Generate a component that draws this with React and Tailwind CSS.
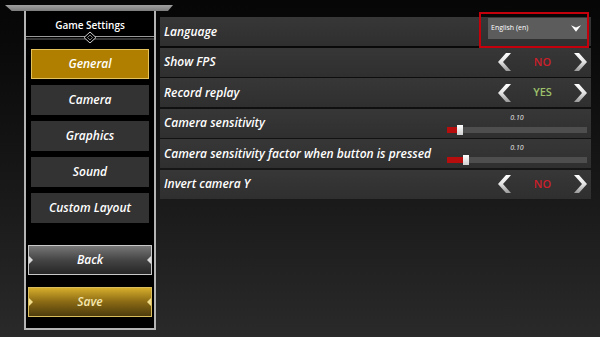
import React from 'react';

const font = { fontFamily: '"Open Sans", "Noto Sans", sans-serif' };

const menu = ['General', 'Camera', 'Graphics', 'Sound', 'Custom Layout'];

const Chevron = ({ dir }) => (
  <svg width="14" height="18" viewBox="0 0 14 18">
    <defs>
      <linearGradient id={`chev-${dir}`} x1="0" y1="0" x2="0" y2="1">
        <stop offset="0" stopColor="#ffffff" />
        <stop offset="0.5" stopColor="#e4e4e4" />
        <stop offset="1" stopColor="#9a9a9a" />
      </linearGradient>
    </defs>
    {dir === 'left' ? (
      <polygon points="9,0 14,0 6,9 14,18 9,18 1,9" fill={`url(#chev-${dir})`} />
    ) : (
      <polygon points="5,0 0,0 8,9 0,18 5,18 13,9" fill={`url(#chev-${dir})`} />
    )}
  </svg>
);

const Toggle = ({ value, yes }) => (
  <div className="mr-[3px] flex w-[91px] items-center">
    <Chevron dir="left" />
    <span className={`flex-1 text-center text-[11px] font-semibold ${yes ? 'text-[#9cc06a]' : 'text-[#cc1f2b]'}`}>{value}</span>
    <Chevron dir="right" />
  </div>
);

const Slider = ({ fill }) => (
  <div className="mr-[4px] flex w-[140px] flex-col items-center self-start pt-[4px]">
    <span className="text-[7px] italic leading-[10px] text-[#e8e8e8]">0.10</span>
    <div className="relative mt-[4px] h-[6px] w-full bg-[#4e4e4e]">
      <div className="h-full bg-[#b80d0d]" style={{ width: fill }} />
      <div className="absolute top-[-2px] h-[10px] w-[6px] bg-gradient-to-b from-white to-[#cfcfcf]" style={{ left: fill }} />
    </div>
  </div>
);

const Row = ({ label, children, relative }) => (
  <div className={`flex h-[29px] items-center justify-between bg-gradient-to-b from-[#373737] to-[#2f2f2f] pl-[4px] ${relative ? 'relative' : ''}`}>
    <span className="text-[12px] font-semibold italic text-white">{label}</span>
    {children}
  </div>
);

const Notches = ({ color }) => (
  <>
    <span className={`absolute left-0 top-1/2 h-0 w-0 -translate-y-1/2 border-y-[4px] border-l-[4px] border-y-transparent ${color}`} />
    <span className={`absolute right-0 top-1/2 h-0 w-0 -translate-y-1/2 border-y-[4px] border-r-[4px] border-y-transparent ${color}`} />
  </>
);

export default function App() {
  return (
    <div style={font} className="relative h-[337px] w-[600px] overflow-hidden bg-gradient-to-b from-[#060606] via-[#161616] to-[#2a2a2a]">
      {/* top bevel band */}
      <div className="absolute left-[5px] top-[5px] h-[6px] w-[168px] bg-gradient-to-b from-[#a0a0a0] to-[#7c7c7c] [clip-path:polygon(0_0,100%_0,97%_100%,4%_100%)]" />

      <div className="flex">
        {/* left panel */}
        <div className="ml-[24px] mt-[8px] flex h-[322px] w-[132px] flex-col border-2 border-[#b4b4b4] bg-black px-[5px]">
          <div className="flex h-[21px] items-end justify-center text-[10px] font-semibold leading-[12px] text-white">Game Settings</div>
          <svg className="-mx-[5px] block" width="128" height="12" viewBox="0 0 128 12">
            <line x1="0" y1="5.5" x2="128" y2="5.5" stroke="#9a9a9a" strokeWidth="1" />
            <line x1="0" y1="8" x2="128" y2="8" stroke="#6a6a6a" strokeWidth="1" />
            <polygon points="64,1 70,6.5 64,12 58,6.5" fill="#000" stroke="#cfcfcf" strokeWidth="1" />
            <polygon points="64,4 66.5,6.5 64,9 61.5,6.5" fill="#000" stroke="#9a9a9a" strokeWidth="0.8" />
          </svg>
          <div className="mt-[6px] flex flex-col gap-[6px]">
            {menu.map((m, i) => (
              <div
                key={m}
                className={`flex h-[30px] items-center justify-center text-[12px] font-semibold italic text-white ${i === 0 ? 'border border-[#e6c25a] bg-[#b07f00]' : 'bg-[#333333]'}`}
              >
                {m}
              </div>
            ))}
          </div>
          <div className="relative -mx-[3px] mt-[22px] flex h-[30px] items-center justify-center border border-[#c8c8c8] bg-gradient-to-b from-[#777777] via-[#454545] to-[#262626] text-[12px] font-semibold italic text-white">
            <Notches color="border-[#d8d8d8]" />
            Back
          </div>
          <div className="relative -mx-[3px] mt-[12px] flex h-[30px] items-center justify-center border border-[#d9bd5c] bg-gradient-to-b from-[#d6ae2c] via-[#8a6a14] to-[#4e3c0c] text-[12px] font-semibold italic text-[#f4e7b0]">
            <Notches color="border-[#f0dc8a]" />
            Save
          </div>
        </div>

        {/* settings rows */}
        <div className="ml-[4px] mt-[17px] flex w-[431px] flex-col gap-[1.5px]">
          <Row label="Language" relative>
            <div className="mr-[3px] mt-[1px] flex h-[21px] w-[100px] items-center justify-between self-start bg-[#5c5c5c] pl-[3px] pr-[7px]">
              <span className="text-[7px] text-white">English (en)</span>
              <svg width="10" height="7" viewBox="0 0 9 6">
                <polygon points="0,0 4.5,2.2 9,0 4.5,6" fill="#fff" />
              </svg>
            </div>
            <div className="absolute left-[319px] top-[-5px] h-[36px] w-[110px] border-2 border-[#c4000c]" />
          </Row>
          <Row label="Show FPS">
            <Toggle value="NO" />
          </Row>
          <Row label="Record replay">
            <Toggle value="YES" yes />
          </Row>
          <Row label="Camera sensitivity">
            <Slider fill="10px" />
          </Row>
          <Row label="Camera sensitivity factor when button is pressed">
            <Slider fill="16px" />
          </Row>
          <Row label="Invert camera Y">
            <Toggle value="NO" />
          </Row>
        </div>
      </div>
    </div>
  );
}
